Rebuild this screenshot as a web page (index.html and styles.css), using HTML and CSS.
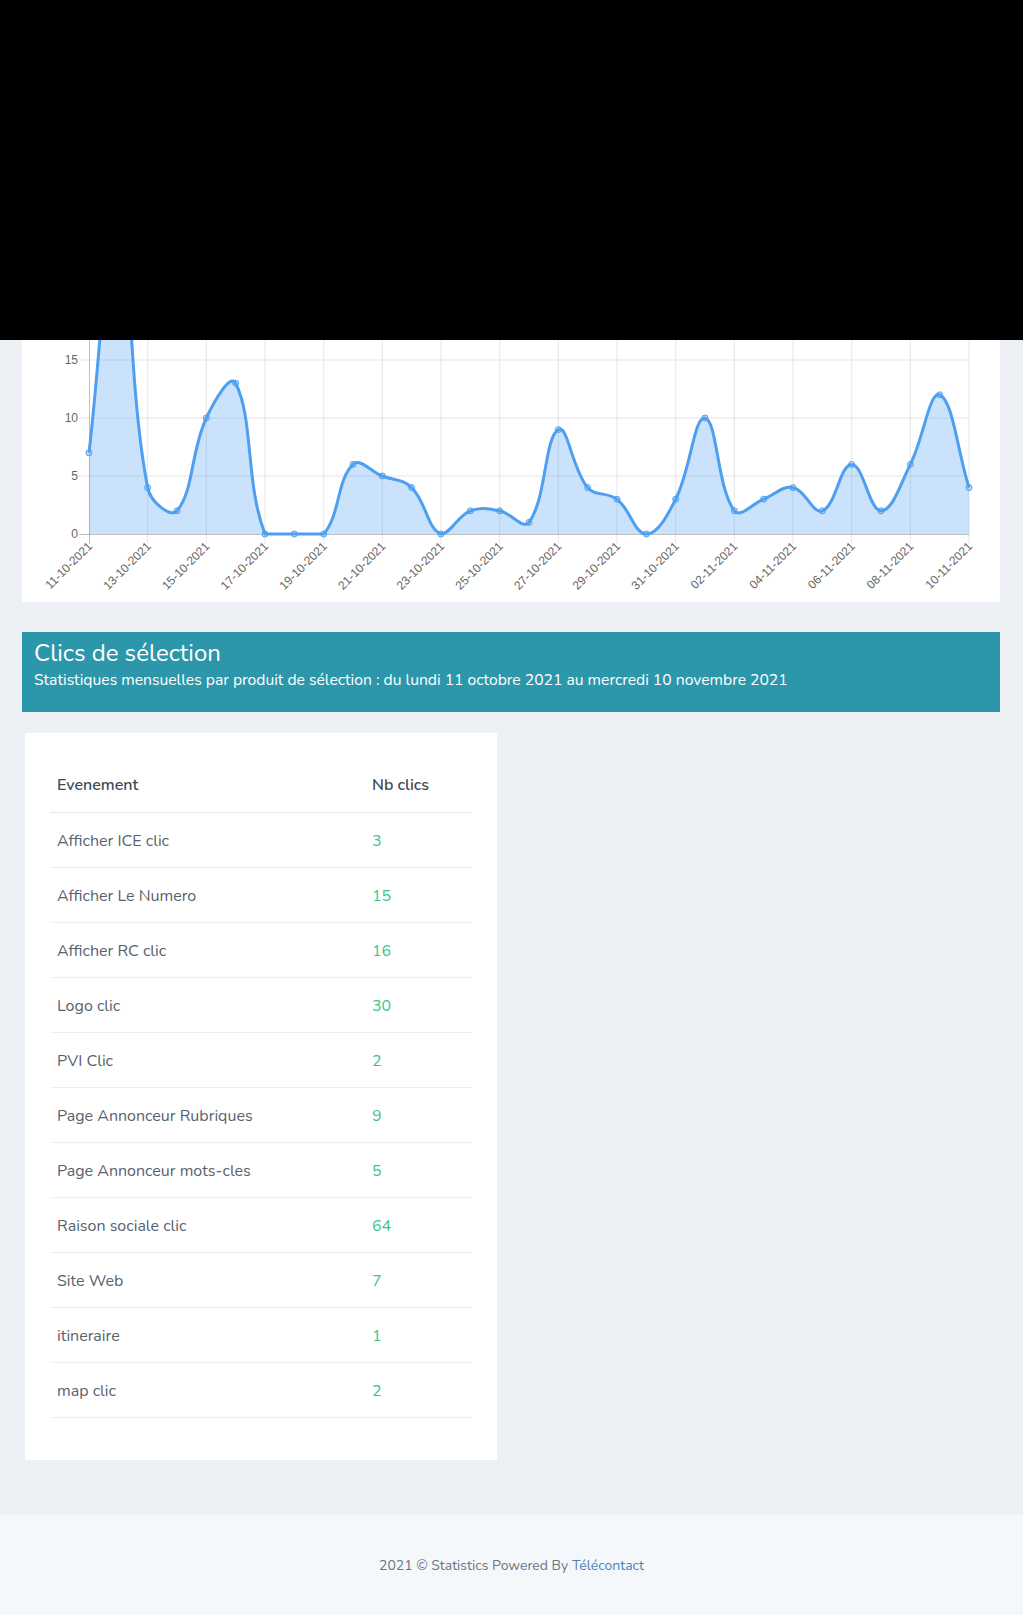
FILE: index.html
```html
<!DOCTYPE html>
<html lang="fr">
<head>
<meta charset="utf-8">
<title>Statistiques</title>
<link rel="stylesheet" href="styles.css">
</head>
<body>
<div class="overlay"></div>
<main class="page">
  <section class="card chart-card">
    <svg id="chart" class="chart" width="978" height="582" viewBox="0 0 978 582" xmlns="http://www.w3.org/2000/svg"></svg>
  </section>

  <section class="banner">
    <h2 class="banner-title">Clics de sélection</h2>
    <p class="banner-sub">Statistiques mensuelles par produit de sélection : du lundi 11 octobre 2021 au mercredi 10 novembre 2021</p>
  </section>

  <div class="row">
    <section class="card table-card">
      <table class="stats">
        <thead>
          <tr><th class="c-name">Evenement</th><th class="c-num">Nb clics</th></tr>
        </thead>
        <tbody>
          <tr><td>Afficher ICE clic</td><td class="num">3</td></tr>
          <tr><td>Afficher Le Numero</td><td class="num">15</td></tr>
          <tr><td>Afficher RC clic</td><td class="num">16</td></tr>
          <tr><td>Logo clic</td><td class="num">30</td></tr>
          <tr><td>PVI Clic</td><td class="num">2</td></tr>
          <tr><td>Page Annonceur Rubriques</td><td class="num">9</td></tr>
          <tr><td>Page Annonceur mots-cles</td><td class="num">5</td></tr>
          <tr><td>Raison sociale clic</td><td class="num">64</td></tr>
          <tr><td>Site Web</td><td class="num">7</td></tr>
          <tr><td>itineraire</td><td class="num">1</td></tr>
          <tr><td>map clic</td><td class="num">2</td></tr>
        </tbody>
      </table>
    </section>
  </div>
</main>
<footer class="footer">
  <p>2021 © Statistics Powered By <a href="#" class="footer-link">Télécontact</a></p>
</footer>
<script src="chart.js"></script>
</body>
</html>
```

FILE: styles.css
```css
* { box-sizing: border-box; }
html, body { margin: 0; padding: 0; }
body {
  background: #edf0f5;
  font-family: "Nunito", "Open Sans", "Lato", sans-serif;
  color: #58626d;
  position: relative;
}
.overlay {
  position: absolute;
  top: 0; left: 0;
  width: 100%;
  height: 340px;
  background: #000;
  z-index: 10;
}
.page {
  padding: 20px 23px 55px 22px;
}
.card { background: #fff; }
.chart-card {
  height: 582px;
  margin-bottom: 30px;
}
.chart { display: block; }
.chart text {
  font-family: "Liberation Sans", Arial, sans-serif;
  font-size: 12px;
  fill: #666;
}
.banner {
  background: #2c97aa;
  color: #fff;
  height: 80px;
  padding: 6px 12px 0;
  margin-bottom: 21px;
}
.banner-title {
  margin: 0;
  font-size: 24px;
  font-weight: 400;
  line-height: 30px;
}
.banner-sub {
  margin: 0;
  font-size: 15.7px;
  line-height: 24px;
}
.row { display: flex; }
.table-card {
  width: 472px;
  margin-left: 3px;
  padding: 24px 25px 42px;
}
.stats {
  width: 100%;
  border-collapse: collapse;
  font-size: 16px;
}
.stats th, .stats td {
  height: 55px;
  padding: 2px 7px 0;
  text-align: left;
  border-bottom: 1px solid #eceef1;
}
.stats th {
  font-weight: 600;
  color: #3f4a56;
  border-bottom-color: #e6e9ec;
}
.c-name { width: 315px; }
.stats .num { color: #3cc48c; }
.footer {
  background: #f5f8fb;
  height: 101px;
  display: flex;
  align-items: center;
  justify-content: center;
}
.footer p {
  margin: 0;
  font-size: 14px;
  color: #6c757d;
}
.footer-link { color: #4f80b8; text-decoration: none; }
```

FILE: chart.js
```javascript
(function () {
  var data = [7,28,4,2,10,13,0,0,0,6,5,4,0,2,2,1,9,4,3,0,3,10,2,3,4,2,6,2,6,12,4];
  var svg = document.getElementById('chart');
  var NS = 'http://www.w3.org/2000/svg';
  var x0 = 67, x1 = 947, base = 514, k = 11.6, top = base - 30 * k;
  var dx = (x1 - x0) / (data.length - 1);
  function el(name, attrs, text) {
    var e = document.createElementNS(NS, name);
    for (var a in attrs) e.setAttribute(a, attrs[a]);
    if (text !== undefined) e.textContent = text;
    svg.appendChild(e);
    return e;
  }
  // horizontal grid
  for (var v = 5; v <= 30; v += 5) {
    var y = base - v * k;
    el('line', {x1: x0 - 10, x2: x1, y1: y, y2: y, stroke: 'rgba(0,0,0,0.1)', 'stroke-width': 1});
    el('text', {x: 56, y: y, dy: '0.35em', 'text-anchor': 'end'}, String(v));
  }
  el('text', {x: 56, y: base, dy: '0.35em', 'text-anchor': 'end'}, '0');
  // vertical grid + labels
  var start = new Date(2021, 9, 11);
  function pad(n) { return (n < 10 ? '0' : '') + n; }
  for (var i = 0; i < data.length; i += 2) {
    var x = x0 + i * dx;
    if (i > 0) el('line', {x1: x, x2: x, y1: top, y2: base + 10, stroke: 'rgba(0,0,0,0.1)', 'stroke-width': 1});
    var d = new Date(start.getFullYear(), start.getMonth(), start.getDate() + i);
    var lab = pad(d.getDate()) + '-' + pad(d.getMonth() + 1) + '-' + d.getFullYear();
    el('text', {transform: 'translate(' + (x + 1) + ',' + (base + 10) + ') rotate(-45)', 'text-anchor': 'end', dy: '0.35em'}, lab);
  }
  // axes
  el('line', {x1: x0 - 10, x2: x1, y1: base + 0.5, y2: base + 0.5, stroke: 'rgba(0,0,0,0.25)', 'stroke-width': 1});
  el('line', {x1: x0 + 0.5, x2: x0 + 0.5, y1: top, y2: base + 10, stroke: 'rgba(0,0,0,0.25)', 'stroke-width': 1});
  // points
  var pts = data.map(function (v, i) { return {x: x0 + i * dx, y: base - v * k}; });
  var t = 0.4;
  pts.forEach(function (p, i) {
    var prev = pts[i - 1] || p, next = pts[i + 1] || p;
    var d01 = Math.hypot(p.x - prev.x, p.y - prev.y);
    var d12 = Math.hypot(next.x - p.x, next.y - p.y);
    var s01 = d01 / (d01 + d12), s12 = d12 / (d01 + d12);
    if (isNaN(s01)) s01 = 0; if (isNaN(s12)) s12 = 0;
    var fa = t * s01, fb = t * s12;
    p.px = p.x - fa * (next.x - prev.x); p.py = p.y - fa * (next.y - prev.y);
    p.nx = p.x + fb * (next.x - prev.x); p.ny = p.y + fb * (next.y - prev.y);
    p.py = Math.min(base, Math.max(top, p.py));
    p.ny = Math.min(base, Math.max(top, p.ny));
  });
  var path = 'M' + pts[0].x + ',' + pts[0].y;
  for (var j = 1; j < pts.length; j++) {
    var a = pts[j - 1], b = pts[j];
    path += ' C' + a.nx + ',' + a.ny + ' ' + b.px + ',' + b.py + ' ' + b.x + ',' + b.y;
  }
  el('path', {d: path + ' L' + x1 + ',' + base + ' L' + x0 + ',' + base + ' Z', fill: 'rgba(80,160,245,0.3)', stroke: 'none'});
  el('path', {d: path, fill: 'none', stroke: '#4e9ff0', 'stroke-width': 3});
  pts.forEach(function (p) {
    el('circle', {cx: p.x, cy: p.y, r: 3, fill: 'rgba(80,160,245,0.3)', stroke: '#4e9ff0', 'stroke-width': 1});
  });
})();
```
